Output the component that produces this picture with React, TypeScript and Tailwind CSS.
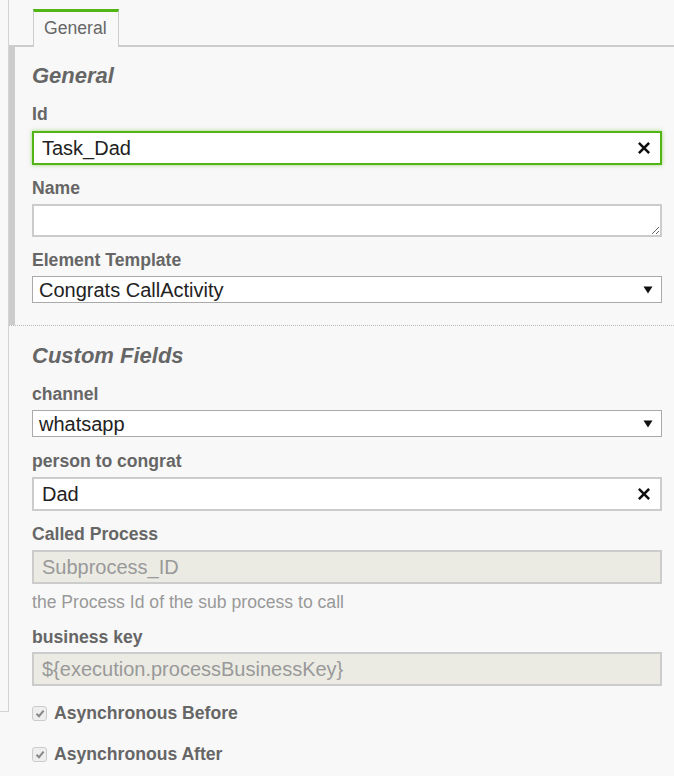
import React from 'react';

function Label({ children, className = '' }: { children: React.ReactNode; className?: string }) {
  return <div className={`text-[17.6px] leading-[20px] font-bold text-[#666] ${className}`}>{children}</div>;
}

function ClearX() {
  return (
    <svg width="12" height="12" viewBox="0 0 12 12" className="shrink-0">
      <path d="M1.8 1.8 L10.2 10.2 M10.2 1.8 L1.8 10.2" stroke="#111" strokeWidth="2.6" strokeLinecap="square" />
    </svg>
  );
}

function TextField({ value, className = '' }: { value: string; className?: string }) {
  return (
    <div className={`flex h-[34px] items-center border-2 border-[#ccc] bg-white pl-[8px] pr-[10px] ${className}`}>
      <input
        readOnly
        value={value}
        className="min-w-0 flex-1 bg-transparent text-[20px] text-[#222] outline-none"
      />
      <ClearX />
    </div>
  );
}

function SelectField({ value, className = '' }: { value: string; className?: string }) {
  return (
    <div className={`flex h-[27px] items-center border border-[#aaa] bg-white pl-[6px] pr-[8px] ${className}`}>
      <span className="flex-1 pt-[1px] text-[20px] leading-[24px] text-[#222]">{value}</span>
      <svg width="10" height="8" viewBox="0 0 10 8">
        <path d="M0.5 0.5 H9.5 L5 7.5 Z" fill="#111" />
      </svg>
    </div>
  );
}

function DisabledField({ value, className = '' }: { value: string; className?: string }) {
  return (
    <div className={`flex h-[34px] items-center border-2 border-[#ccc] bg-[#ebebe4] pl-[8px] ${className}`}>
      <span className="text-[20px] leading-[24px] text-[#999]">{value}</span>
    </div>
  );
}

function CheckRow({ label, className = '' }: { label: string; className?: string }) {
  return (
    <div className={`flex items-center gap-[7px] ${className}`}>
      <span className="flex h-[15px] w-[15px] items-center justify-center rounded-[3px] border border-[#ccc] bg-[#eee]">
        <svg width="10" height="9" viewBox="0 0 10 9">
          <path d="M1.5 4.8 L4 7.2 L8.6 1.6" stroke="#888" strokeWidth="2" fill="none" />
        </svg>
      </span>
      <span className="text-[17.6px] leading-[20px] font-bold text-[#666]">{label}</span>
    </div>
  );
}

export default function App() {
  return (
    <div className="flex min-h-[776px] w-full items-start bg-[#f8f8f8] font-['Liberation_Sans',Arial,sans-serif]">
      {/* left rail */}
      <div className="h-[712px] w-[9px] shrink-0 border-r border-b border-[#d4d4d4]" />

      <div className="flex min-w-0 flex-1 flex-col">
        {/* tabs */}
        <div className="flex border-b-2 border-[#ccc] pt-[9px] pl-[24px]">
          <div className="-mb-[2px] h-[38px] border-x border-t-[3px] border-x-[#ccc] border-t-[#52b415] bg-[#f8f8f8] pt-[6px] pl-[10px] pr-[11px] text-[17.6px] leading-[20px] text-[#666]">
            General
          </div>
        </div>

        {/* General group */}
        <div className="border-l-[6px] border-[#ccc] pt-[17px] pb-[22px] pl-[17px] pr-[12px]">
          <h2 className="text-[22px] leading-[24px] font-bold italic text-[#666]">General</h2>

          <Label className="mt-[16px]">Id</Label>
          <div className="mt-[7px] flex h-[34px] items-center border-2 border-[#52b415] bg-white pl-[8px] pr-[10px] shadow-[0_0_4px_rgba(82,180,21,0.55)]">
            <input readOnly value="Task_Dad" className="min-w-0 flex-1 bg-transparent text-[20px] text-[#222] outline-none" />
            <ClearX />
          </div>

          <Label className="mt-[13px]">Name</Label>
          <textarea
            readOnly
            className="mt-[6px] block h-[33px] w-full border-2 border-[#ccc] bg-white px-[7px] text-[20px] outline-none"
          />

          <Label className="mt-[13px]">Element Template</Label>
          <SelectField value="Congrats CallActivity" className="mt-[6px]" />
        </div>

        {/* Custom Fields group */}
        <div className="border-t border-dotted border-[#bbb] pt-[18px] pl-[23px] pr-[12px]">
          <h2 className="text-[22px] leading-[24px] font-bold italic text-[#666]">Custom Fields</h2>

          <Label className="mt-[16px]">channel</Label>
          <SelectField value="whatsapp" className="mt-[6px]" />

          <Label className="mt-[14px]">person to congrat</Label>
          <TextField value="Dad" className="mt-[6px]" />

          <Label className="mt-[13px]">Called Process</Label>
          <DisabledField value="Subprocess_ID" className="mt-[6px]" />
          <div className="mt-[8px] text-[17.6px] leading-[20px] text-[#999]">the Process Id of the sub process to call</div>

          <Label className="mt-[15px]">business key</Label>
          <DisabledField value="${execution.processBusinessKey}" className="mt-[5px]" />

          <CheckRow label="Asynchronous Before" className="mt-[17px]" />
          <CheckRow label="Asynchronous After" className="mt-[21px]" />
        </div>
      </div>
    </div>
  );
}
